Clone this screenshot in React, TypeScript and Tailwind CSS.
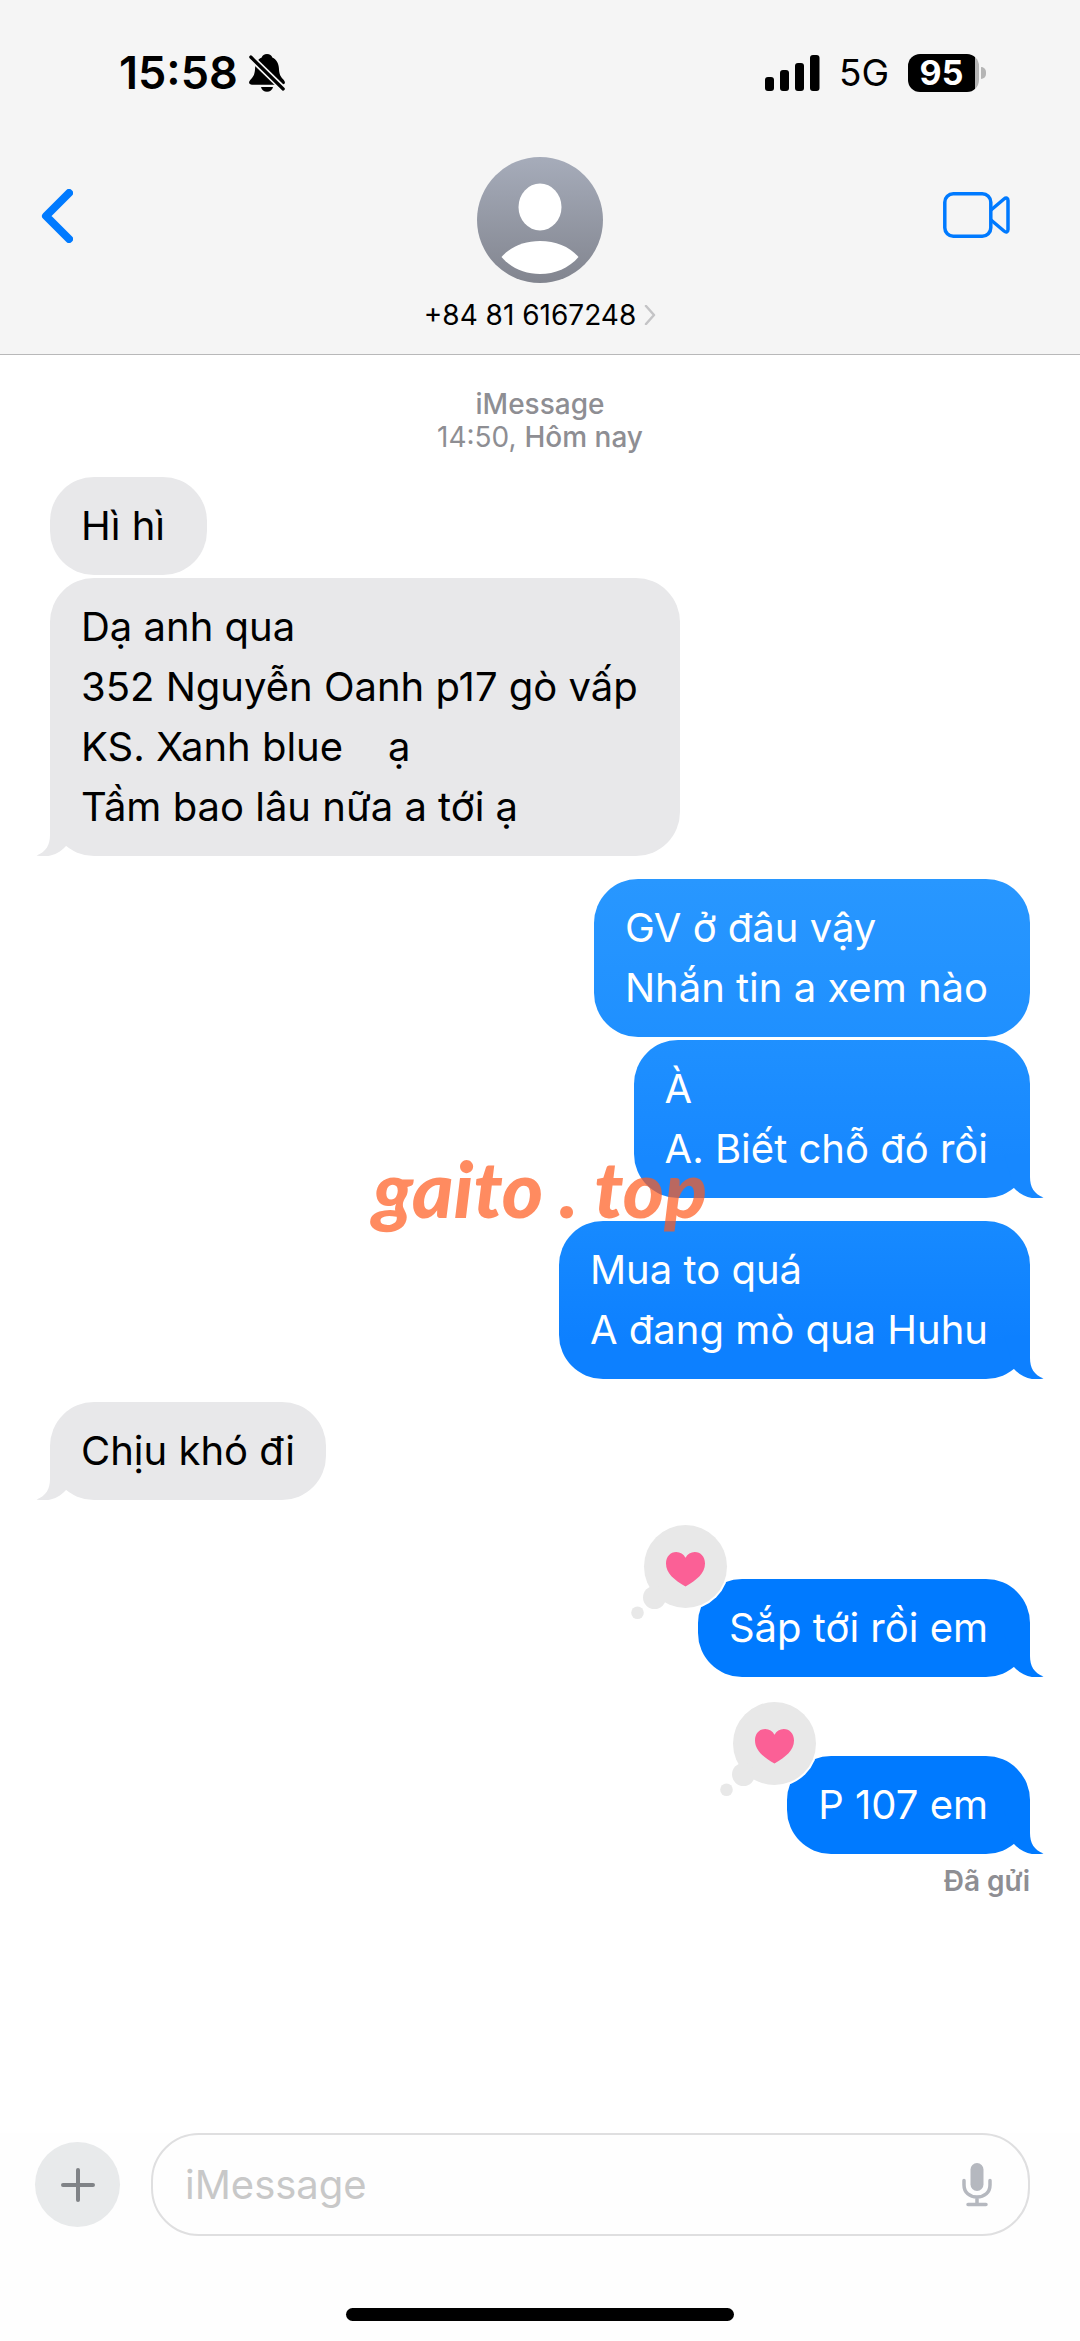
import type { ReactNode } from "react";
import clsx from "clsx";

type Message = {
  from: "me" | "them";
  lines: string[];
  tail?: boolean;
  snug?: boolean;
  loved?: boolean;
  spacing: string;
  fill?: string;
  tailColor?: string;
};

const messages: Message[] = [
  { from: "them", lines: ["Hì hì"], spacing: "mt-[23px]" },
  {
    from: "them",
    lines: [
      "Dạ anh qua",
      "352 Nguyễn Oanh p17 gò vấp",
      "KS. Xanh blue    ạ",
      "Tầm bao lâu nữa a tới ạ",
    ],
    tail: true,
    spacing: "mt-[3px]",
  },
  {
    from: "me",
    lines: ["GV ở đâu vậy", "Nhắn tin a xem nào"],
    spacing: "mt-[23px]",
    fill: "bg-linear-to-b from-[#2897ff] to-[#1f90ff]",
  },
  {
    from: "me",
    lines: ["À", "A. Biết chỗ đó rồi"],
    tail: true,
    spacing: "mt-[3px]",
    fill: "bg-linear-to-b from-[#1f90ff] to-[#1788ff] to-75%",
    tailColor: "text-[#1788ff]",
  },
  {
    from: "me",
    lines: ["Mua to quá", "A đang mò qua Huhu"],
    tail: true,
    spacing: "mt-[23px]",
    fill: "bg-linear-to-b from-[#178aff] to-[#0d80ff] to-75%",
    tailColor: "text-[#0d80ff]",
  },
  { from: "them", lines: ["Chịu khó đi"], tail: true, snug: true, spacing: "mt-[23px]" },
  {
    from: "me",
    lines: ["Sắp tới rồi em"],
    tail: true,
    loved: true,
    spacing: "mt-[79px]",
    fill: "bg-[#007aff]",
    tailColor: "text-[#007aff]",
  },
  {
    from: "me",
    lines: ["P 107 em"],
    tail: true,
    loved: true,
    spacing: "mt-[79px]",
    fill: "bg-[#007aff]",
    tailColor: "text-[#007aff]",
  },
];

function BellSlash() {
  return (
    <svg viewBox="0 0 36 38" className="h-[38px] w-9" aria-hidden="true">
      <path
        d="M18 0c-2.800 0-4.600 1.500-5.300 3.400C8.500 5.200 6.300 9.300 6.100 14c-.2 5.500-1.200 8-4 11C.3 27-.4 28.300.4 29.600c.5.800 1.300 1.100 2.400 1.100h30.400c1.100 0 1.900-.3 2.400-1.100.8-1.300.1-2.600-1.700-4.600-2.800-3-3.800-5.500-4-11-.2-4.700-2.400-8.800-6.600-10.600C22.600 1.500 20.800 0 18 0Z"
        fill="#000"
      />
      <path d="M12 33h12c-.6 3-3 4.700-6 4.700S12.600 36 12 33Z" fill="#000" />
      <path d="M-1 .5 38 38.500" stroke="#f5f5f5" strokeWidth="6.500" />
      <path d="M1.800 3 34.200 35" stroke="#000" strokeWidth="3.200" strokeLinecap="round" />
    </svg>
  );
}

function Signal() {
  return (
    <svg viewBox="0 0 55 36" className="h-9 w-[55px]" aria-hidden="true">
      <rect x="0" y="22" width="9" height="14" rx="3" />
      <rect x="15" y="15" width="9" height="21" rx="3" />
      <rect x="30" y="8" width="9" height="28" rx="3" />
      <rect x="45" y="0" width="9.500" height="36" rx="3" />
    </svg>
  );
}

function StatusBar() {
  return (
    <div className="flex h-[146px] items-start justify-between pt-[45px] pr-[94px] pl-[119px]">
      <div className="flex h-14 items-center gap-[11px]">
        <span className="text-[45px] leading-[56px] font-semibold">15:58</span>
        <BellSlash />
      </div>
      <div className="flex h-14 items-center gap-[19px]">
        <Signal />
        <span className="text-[37px] leading-[56px]">5G</span>
        <div className="flex items-center gap-[2px]">
          <span className="h-[38px] w-[71px] rounded-xl bg-linear-to-r from-black from-95% to-[#b5b5b5] to-95% pr-1 text-center text-[34px] leading-[38px] font-bold text-white">
            95
          </span>
          <span className="h-3 w-[5px] rounded-r-full bg-[#b5b5b5]" />
        </div>
      </div>
    </div>
  );
}

function Avatar() {
  return (
    <svg viewBox="0 0 126 126" className="size-[126px]" aria-hidden="true">
      <defs>
        <linearGradient id="avatar" x1="0" y1="0" x2="0" y2="1">
          <stop offset="0" stopColor="#a6acba" />
          <stop offset="1" stopColor="#82858f" />
        </linearGradient>
      </defs>
      <circle cx="63" cy="63" r="63" fill="url(#avatar)" />
      <ellipse cx="63" cy="50" rx="21.500" ry="23.500" fill="#fff" />
      <path d="M24.500 100C33 90 47 84 63 84s30 6 38.500 16C92 111 78 117 63 117s-29-6-38.500-17Z" fill="#fff" />
    </svg>
  );
}

function Header() {
  return (
    <header className="border-b border-[#b8b8b9] bg-[#f5f5f5]">
      <StatusBar />
      <div className="grid grid-cols-[1fr_auto_1fr] items-start px-[41px] pt-[11px] pb-[19px]">
        <button type="button" aria-label="Quay lại" className="mt-8 justify-self-start">
          <svg viewBox="0 0 32 54" className="h-[54px] w-8" fill="none">
            <path d="M28 4 5 27l23 23" stroke="#007aff" strokeWidth="8" strokeLinecap="round" strokeLinejoin="round" />
          </svg>
        </button>
        <button type="button" className="flex flex-col items-center gap-3">
          <Avatar />
          <span className="flex items-center gap-2 text-[28px] leading-10">
            +84 81 6167248
            <svg viewBox="0 0 12 20" className="h-5 w-3" fill="none" aria-hidden="true">
              <path d="m2 1 8 9-8 9" stroke="#c4c4c6" strokeWidth="2.500" strokeLinecap="round" strokeLinejoin="round" />
            </svg>
          </span>
        </button>
        <button type="button" aria-label="FaceTime" className="mt-[35px] mr-[29px] justify-self-end">
          <svg viewBox="0 0 67 46" className="h-[46px] w-[67px]" fill="none" stroke="#007aff" strokeWidth="3.500" strokeLinejoin="round">
            <rect x="1.800" y="1.800" width="46" height="42.400" rx="8.500" />
            <path d="M48 18 61 7c2.200-1.800 4-1 4 1.500v29c0 2.500-1.800 3.300-4 1.500L48 28" />
          </svg>
        </button>
      </div>
    </header>
  );
}

function Tail({ side, className }: { side: "left" | "right"; className?: string }) {
  return (
    <svg
      viewBox="0 0 44 44"
      className={clsx(
        "absolute bottom-0 size-11",
        side === "right" ? "-right-[14px]" : "-left-[14px] -scale-x-100",
        className
      )}
      fill="currentColor"
      aria-hidden="true"
    >
      <path d="M4 0h26v23c0 10 4 17 13.500 20.500C33 46 22 43 14 34Z" />
    </svg>
  );
}

function Loved() {
  return (
    <svg viewBox="0 0 100 100" className="absolute -top-14 -left-[68px] size-[100px]" role="img" aria-label="Yêu thích">
      <circle cx="55.500" cy="43.500" r="43.500" fill="#fff" />
      <circle cx="55.500" cy="43.500" r="41.500" fill="#e8e8e8" />
      <circle cx="24.500" cy="74.500" r="11.500" fill="#e8e8e8" />
      <circle cx="7.500" cy="89.800" r="6.300" fill="#e8e8e8" />
      <path
        d="M55.500 63.500C44 57 36 50 36 40.500c0-7 4.500-11.500 10.200-11.500 4.100 0 7.300 2.200 9.300 5.800C57.500 31.200 60.700 29 64.800 29 70.500 29 75 33.500 75 40.500c0 9.500-8 16.500-19.500 23Z"
        fill="#fb6096"
      />
    </svg>
  );
}

function Bubble({ message }: { message: Message }) {
  const mine = message.from === "me";
  return (
    <div className={clsx("flex", mine && "justify-end", message.spacing)}>
      <div
        className={clsx(
          "relative rounded-[44px] py-[19px] pl-[31px] text-[40px] leading-[60px] whitespace-pre",
          message.snug ? "pr-[31px]" : "pr-[42px]",
          mine ? "text-white" : "bg-[#e8e8ea] text-black",
          message.fill
        )}
      >
        {message.tail && (
          <Tail side={mine ? "right" : "left"} className={mine ? message.tailColor : "text-[#e8e8ea]"} />
        )}
        {message.loved && <Loved />}
        {message.lines.map((line) => (
          <p key={line} className="relative">
            {line}
          </p>
        ))}
      </div>
    </div>
  );
}

function Watermark({ children }: { children: ReactNode }) {
  return (
    <div className="pointer-events-none absolute top-[785px] left-1/2 flex -translate-x-1/2 gap-4 font-[Lato] text-[79px] leading-[96px] font-black text-[#ff5b1e] italic opacity-70">
      {children}
    </div>
  );
}

function Composer() {
  return (
    <footer className="bg-[#fefefe]">
      <form className="flex items-center gap-[31px] pr-[50px] pl-[35px]">
        <button
          type="button"
          aria-label="Thêm"
          className="flex size-[85px] shrink-0 items-center justify-center rounded-full bg-[#e8eaeb]"
        >
          <svg viewBox="0 0 34 34" className="size-[34px]" stroke="#808387" strokeWidth="4" strokeLinecap="round">
            <path d="M17 2v30M2 17h30" />
          </svg>
        </button>
        <div className="flex h-[103px] flex-1 items-center rounded-[48px] border-2 border-[#dfdfe0] pr-9 pl-8">
          <input
            type="text"
            aria-label="iMessage"
            placeholder="iMessage"
            className="min-w-0 flex-1 bg-transparent text-[40px] leading-[60px] outline-none placeholder:text-[#c8c8c8]"
          />
          <button type="button" aria-label="Đọc chính tả">
            <svg viewBox="0 0 30 44" className="h-11 w-[30px]" fill="none" stroke="#b5b8bf" strokeWidth="3.500" strokeLinecap="round">
              <rect x="8.500" y="0" width="13" height="28" rx="6.500" fill="#b5b8bf" stroke="none" />
              <path d="M2 17.500v4.500c0 7.500 5.500 12 13 12s13-4.500 13-12v-4.500M15 34v7M6 41.500h18" />
            </svg>
          </button>
        </div>
      </form>
      <div className="flex justify-center pt-[72px] pb-5">
        <div className="h-[13px] w-[36%] rounded-full bg-black" />
      </div>
    </footer>
  );
}

export default function App() {
  return (
    <div className="flex min-h-screen flex-col bg-white font-[Inter,sans-serif] text-black">
      <Header />
      <main className="relative flex-1 px-[50px] pt-[33px]">
        <div className="text-center text-[28px] leading-[33px] text-[#8e8e93]">
          <p className="font-medium">iMessage</p>
          <p>
            14:50, <span className="font-medium">Hôm nay</span>
          </p>
        </div>
        {messages.map((message) => (
          <Bubble key={message.lines[0]} message={message} />
        ))}
        <p className="mt-[11px] text-right text-[28px] leading-[33px] font-semibold text-[#8e8e93]">Đã gửi</p>
        <Watermark>
          <span>gaito</span>
          <span>.</span>
          <span>top</span>
        </Watermark>
      </main>
      <Composer />
    </div>
  );
}
